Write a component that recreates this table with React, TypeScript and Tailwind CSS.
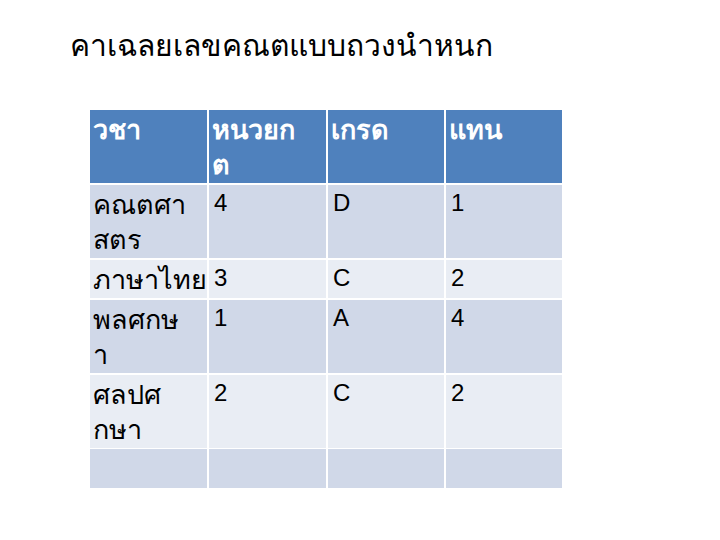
const header = [['วชา'], ['หนวยก', 'ต'], ['เกรด'], ['แทน']]

const rows: { cells: string[][]; bg: string; h: string }[] = [
  { cells: [['คณตศา', 'สตร'], ['4'], ['D'], ['1']], bg: 'bg-[#d0d8e8]', h: 'h-[73px]' },
  { cells: [['ภาษาไทย'], ['3'], ['C'], ['2']], bg: 'bg-[#e9edf4]', h: 'h-[38px]' },
  { cells: [['พลศกษ', 'า'], ['1'], ['A'], ['4']], bg: 'bg-[#d0d8e8]', h: 'h-[73px]' },
  { cells: [['ศลปศ', 'กษา'], ['2'], ['C'], ['2']], bg: 'bg-[#e9edf4]', h: 'h-[72px]' },
  { cells: [[], [], [], []], bg: 'bg-[#d0d8e8]', h: 'h-[39px]' },
]

const isThai = (s: string) => /[\u0E00-\u0E7F]/.test(s)

function Lines({ lines }: { lines: string[] }) {
  return (
    <>
      {lines.map((l, i) =>
        isThai(l) ? (
          <div key={i} className="whitespace-nowrap h-[35px] text-[27px] leading-[35px] -ml-[2px]">
            {l}
          </div>
        ) : (
          <div key={i} className="whitespace-nowrap text-[24px] leading-[30px]">
            {l}
          </div>
        )
      )}
    </>
  )
}

export default function App() {
  return (
    <div className="w-[720px] h-[540px] bg-white font-['Liberation_Sans',sans-serif]">
      <h1 className="pl-[70px] pt-[26px] text-[30px] leading-[40px] text-black font-normal">
        คาเฉลยเลขคณตแบบถวงนำหนก
      </h1>
      <div className="ml-[90px] mt-[44px] w-[472px] flex flex-col gap-[2px]">
        <div className="grid grid-cols-[117px_117px_116px_116px] gap-[2px] h-[73px]">
          {header.map((c, i) => (
            <div key={i} className="bg-[#4f81bd] text-white font-bold pl-[5px] pt-[3px]">
              <Lines lines={c} />
            </div>
          ))}
        </div>
        {rows.map((r, ri) => (
          <div key={ri} className={`grid grid-cols-[117px_117px_116px_116px] gap-[2px] ${r.h}`}>
            {r.cells.map((c, i) => (
              <div key={i} className={`${r.bg} text-black pl-[5px] pt-[3px]`}>
                <Lines lines={c} />
              </div>
            ))}
          </div>
        ))}
      </div>
    </div>
  )
}
